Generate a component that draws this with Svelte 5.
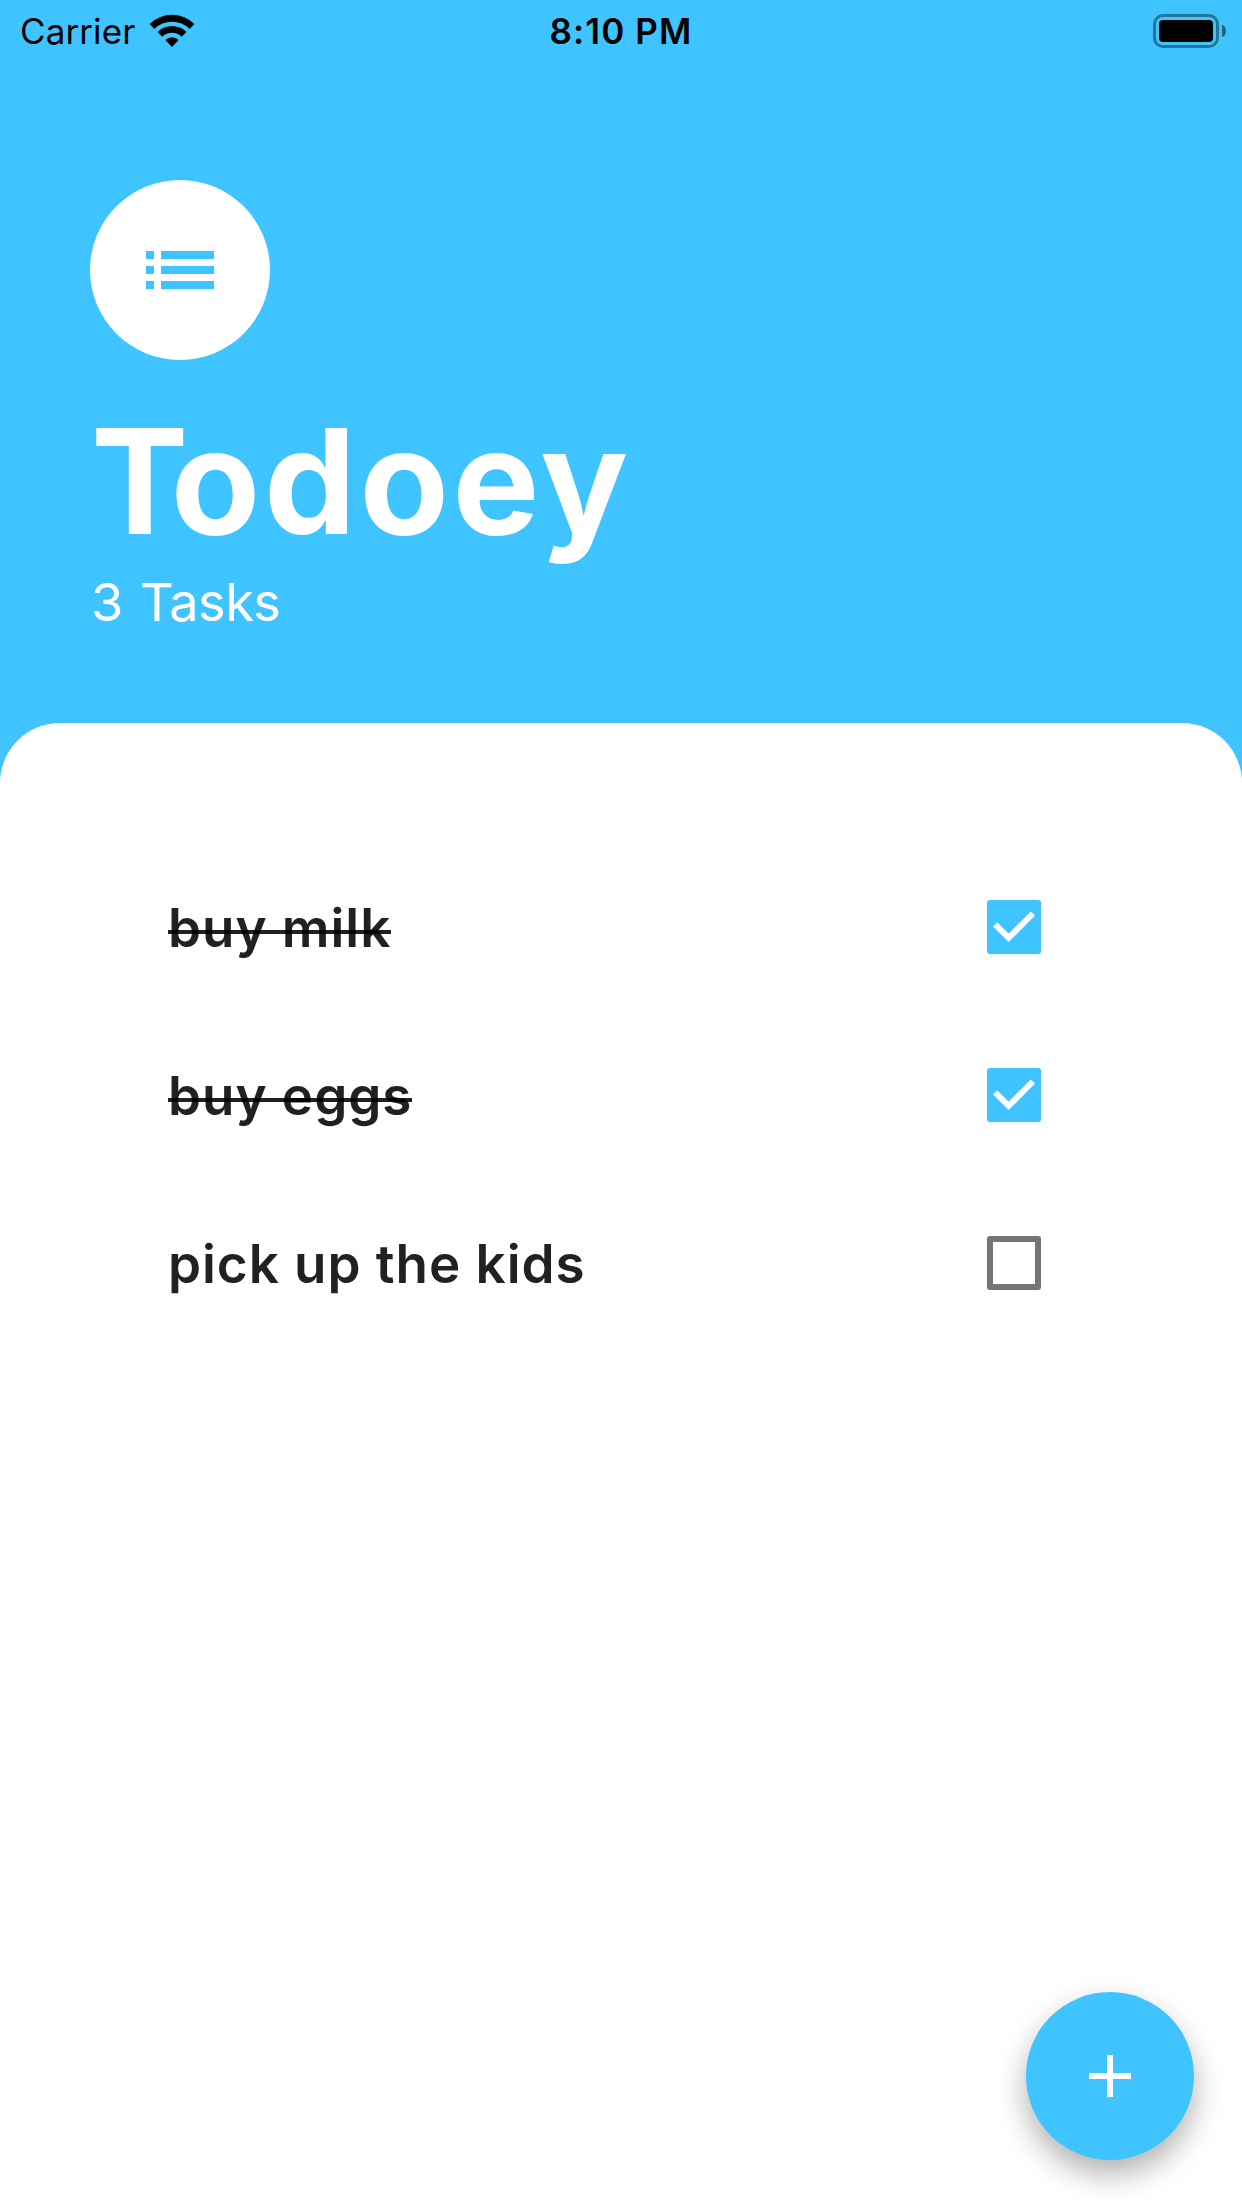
<script>
  let tasks = $state([
    { name: 'buy milk', done: true },
    { name: 'buy eggs', done: true },
    { name: 'pick up the kids', done: false }
  ]);
</script>

<div class="screen">
  <div class="status">
    <div class="network">
      <span class="carrier">Carrier</span>
      <svg class="wifi" width="46" height="34" viewBox="0 0 46 34" aria-hidden="true">
        <path d="M0.5 10 A32 32 0 0 1 45.5 10 L40.6 14.9 A25 25 0 0 0 5.4 14.9 Z" />
        <path d="M8.5 18 A20.7 20.7 0 0 1 37.5 18 L32.7 22.8 A13.8 13.8 0 0 0 13.3 22.8 Z" />
        <path d="M16.3 26 A9.6 9.6 0 0 1 29.7 26 L23 33 Z" />
      </svg>
    </div>
    <span class="time">8:10 PM</span>
    <div class="battery">
      <div class="shell"><div class="charge"></div></div>
      <div class="nub"></div>
    </div>
  </div>

  <header>
    <div class="avatar">
      <svg width="68" height="38" viewBox="0 0 68 38" aria-hidden="true">
        <path d="M0 0h8v8H0zM15 0h53v8H15zM0 15h8v8H0zM15 15h53v8H15zM0 30h8v8H0zM15 30h53v8H15z" />
      </svg>
    </div>
    <h1><span class="initial">T</span>odoey</h1>
    <p>{tasks.length} Tasks</p>
  </header>

  <main>
    <ul>
      {#each tasks as task}
        <li>
          <span class="name" class:done={task.done}>{task.name}</span>
          <button
            class="box"
            class:checked={task.done}
            aria-label={task.name}
            onclick={() => (task.done = !task.done)}
          >
            {#if task.done}
              <svg width="54" height="54" viewBox="0 0 54 54" aria-hidden="true">
                <path d="M8.1 24.3 21.6 37.8 45.9 13.5" />
              </svg>
            {/if}
          </button>
        </li>
      {/each}
    </ul>
    <button class="fab" aria-label="Add task">
      <svg width="42" height="42" viewBox="0 0 42 42" aria-hidden="true">
        <path d="M18 0h6v18h18v6H24v18h-6V24H0v-6h18z" />
      </svg>
    </button>
  </main>
</div>

<style>
  .screen {
    display: flex;
    flex-direction: column;
    width: 1242px;
    height: 2208px;
    overflow: hidden;
    background: #40c4ff;
    font-family: Inter, 'Liberation Sans', sans-serif;
  }

  .status {
    display: grid;
    grid-template-columns: 1fr auto 1fr;
    align-items: center;
    height: 60px;
    padding: 0 16px;
    box-sizing: border-box;
    color: #000;
    font-size: 35px;
    line-height: 62px;
  }
  .network {
    display: flex;
    align-items: center;
    gap: 13.5px;
    padding-left: 4px;
  }
  .wifi {
    margin-bottom: 1px;
  }
  .carrier {
    letter-spacing: 0.1px;
  }
  .time {
    font-weight: 600;
    letter-spacing: 1.1px;
  }
  .battery {
    display: flex;
    align-items: center;
    justify-content: flex-end;
    gap: 3px;
  }
  .shell {
    box-sizing: border-box;
    width: 66px;
    height: 34px;
    padding: 3px;
    border: 3px solid rgba(0, 0, 0, 0.4);
    border-radius: 10px;
  }
  .charge {
    height: 22px;
    border-radius: 4px;
    background: #000;
  }
  .nub {
    width: 4px;
    height: 12px;
    border-radius: 0 4px 4px 0 / 0 6px 6px 0;
    background: rgba(0, 0, 0, 0.5);
  }

  header {
    height: 663px;
    padding: 120px 90px 0;
    box-sizing: border-box;
    color: #fff;
  }
  .avatar {
    display: flex;
    align-items: center;
    justify-content: center;
    width: 180px;
    height: 180px;
    margin-bottom: 30px;
    border-radius: 50%;
    background: #fff;
  }
  .avatar path {
    fill: #40c4ff;
  }
  h1 {
    margin: 0;
    padding-left: 1px;
    font-size: 146px;
    font-weight: 700;
    line-height: 182px;
    letter-spacing: 3.5px;
  }
  .initial {
    letter-spacing: -17.6px;
  }
  p {
    margin: 0;
    padding-left: 1px;
    font-size: 52.4px;
    line-height: 60px;
    letter-spacing: -0.6px;
    word-spacing: 3px;
  }

  main {
    display: flex;
    flex: 1;
    flex-direction: column;
    justify-content: space-between;
    padding: 120px 48px 48px 168px;
    border-radius: 60px 60px 0 0;
    background: #fff;
  }
  ul {
    margin: 0;
    padding: 0 153px 0 0;
    list-style: none;
  }
  li {
    display: flex;
    align-items: center;
    justify-content: space-between;
    height: 168px;
  }
  .name {
    position: relative;
    padding-top: 2px;
    color: rgba(0, 0, 0, 0.87);
    font-size: 53px;
    font-weight: 600;
    line-height: 70px;
    letter-spacing: 0.95px;
    white-space: nowrap;
  }
  .done::after {
    content: '';
    position: absolute;
    top: 39px;
    left: 0;
    right: 0;
    height: 4px;
    background: rgba(0, 0, 0, 0.87);
  }
  button {
    padding: 0;
    border: 0;
  }
  .box {
    width: 54px;
    height: 54px;
    box-sizing: border-box;
    border: 6px solid #757575;
    border-radius: 3px;
    background: #fff;
  }
  .checked {
    border: 0;
    background: #40c4ff;
  }
  .box svg {
    display: block;
  }
  .box path {
    fill: none;
    stroke: #fff;
    stroke-width: 6;
  }
  .fab {
    display: flex;
    align-items: center;
    align-self: flex-end;
    justify-content: center;
    width: 168px;
    height: 168px;
    border-radius: 50%;
    background: #40c4ff;
    box-shadow: 0 14px 30px rgba(0, 0, 0, 0.31);
  }
  .fab path {
    fill: #fff;
  }
</style>
